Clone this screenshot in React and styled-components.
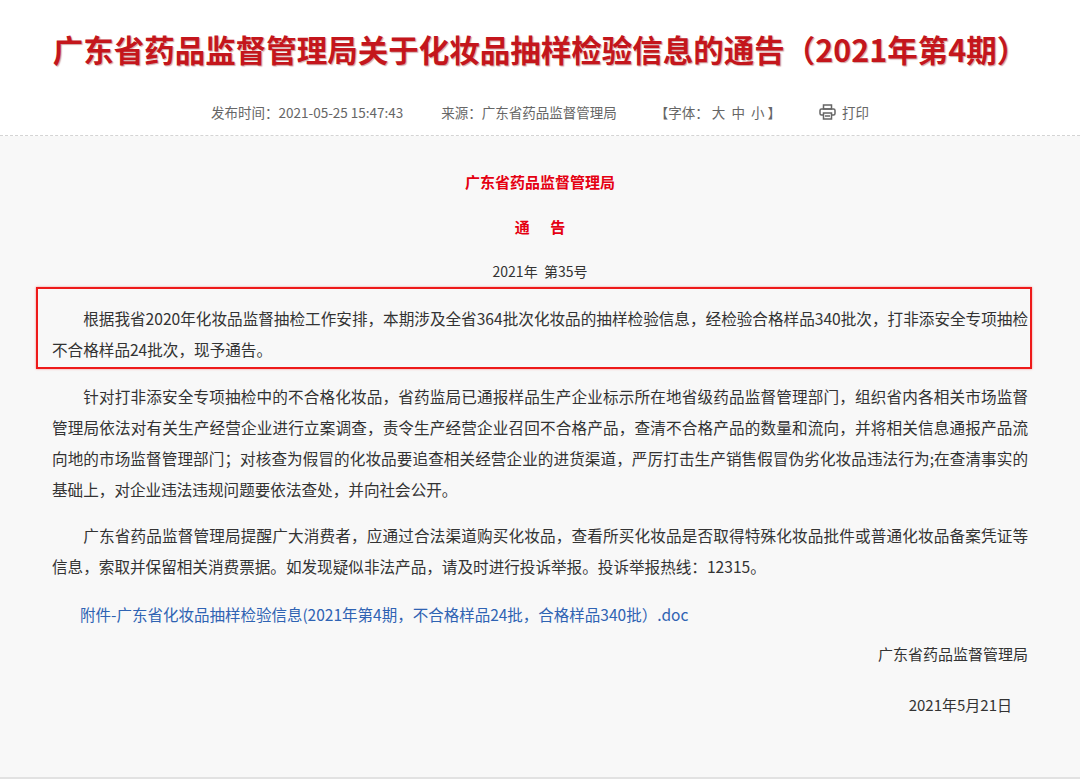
import React from "react";
import styled, { createGlobalStyle } from "styled-components";

const Global = createGlobalStyle`
  html, body { margin: 0; padding: 0; background: #fff; }
  body { font-family: "Noto Sans CJK SC", "Liberation Sans", sans-serif; color: #333; }
`;

const Header = styled.header`
  background: #fff;
  padding-top: 29px;
  border-bottom: 1px dashed #d4d4d4;
`;
const Title = styled.h1`
  margin: 0;
  text-align: center;
  color: #c4161c;
  font-size: 30.5px;
  font-weight: 700;
  line-height: 40px;
  letter-spacing: 0;
  text-shadow: 1px 1px 1px rgba(120,0,0,0.35);
`;
const Meta = styled.div`
  display: flex;
  justify-content: center;
  align-items: center;
  gap: 38px;
  padding: 33px 0 13px 0;
  font-size: 13.5px;
  color: #666;
  line-height: 20px;
`;
const MetaItem = styled.span`
  display: inline-flex;
  align-items: center;
  gap: 6px;
`;
const Body = styled.main`
  background: #f8f8f8;
  padding: 34px 52px 60px 52px;
  border-bottom: 2px solid #e2e2e2;
`;
const Center = styled.div`
  text-align: center;
  color: ${p => p.red ? "#e50012" : "#333"};
  font-weight: ${p => p.red ? 700 : 400};
  font-size: ${p => p.red ? 15 : 14}px;
  line-height: 24px;
  margin-bottom: ${p => p.mb}px;
  white-space: pre;
`;
const Box = styled.div`
  border: 2px solid #ee1a1a;
  margin: 0 -4px 0 -16px;
  padding: 14px 2px 2px 14px;
  box-shadow: 0 0 2px rgba(238,26,26,0.5);
`;
const P = styled.p`
  margin: 0 0 ${p => p.mb ?? 15}px 0;
  font-size: 15.6px;
  line-height: 31px;
  text-indent: 2em;
  text-align: justify;
  color: #333;
`;
const Link = styled.a`
  display: block;
  margin: 20px 0 0 28px;
  color: #2f63b3;
  font-size: 15.5px;
  line-height: 24px;
  text-decoration: none;
`;
const Sign = styled.div`
  text-align: right;
  font-size: 15px;
  line-height: 24px;
  color: #333;
  padding-right: ${p => p.pr}px;
  margin-top: ${p => p.mt}px;
`;

const PrintIcon = () => (
  <svg width="17" height="16" viewBox="0 0 17 16" fill="none" stroke="#666" strokeWidth="1.5">
    <rect x="4.5" y="1" width="8" height="4" />
    <rect x="1" y="5" width="15" height="6" rx="1.5" />
    <rect x="4.5" y="9" width="8" height="6" fill="#fff" />
    <line x1="6" y1="12" x2="11" y2="12" />
  </svg>
);

export default function App() {
  return (
    <>
      <Global />
      <Header>
        <Title>广东省药品监督管理局关于化妆品抽样检验信息的通告（2021年第4期）</Title>
        <Meta>
          <MetaItem>发布时间：2021-05-25 15:47:43</MetaItem>
          <MetaItem>来源：广东省药品监督管理局</MetaItem>
          <MetaItem>【字体：&nbsp;大&nbsp;&nbsp;中&nbsp;&nbsp;小&nbsp;】</MetaItem>
          <MetaItem><PrintIcon />打印</MetaItem>
        </Meta>
      </Header>
      <Body>
        <Center red mb={21}>广东省药品监督管理局</Center>
        <Center red mb={20}>{"通      告"}</Center>
        <Center mb={4}>2021年  第35号</Center>
        <Box>
          <P mb={0}>根据我省2020年化妆品监督抽检工作安排，本期涉及全省364批次化妆品的抽样检验信息，经检验合格样品340批次，打非添安全专项抽检不合格样品24批次，现予通告。</P>
        </Box>
        <P style={{ marginTop: 12 }}>针对打非添安全专项抽检中的不合格化妆品，省药监局已通报样品生产企业标示所在地省级药品监督管理部门，组织省内各相关市场监督管理局依法对有关生产经营企业进行立案调查，责令生产经营企业召回不合格产品，查清不合格产品的数量和流向，并将相关信息通报产品流向地的市场监督管理部门；对核查为假冒的化妆品要追查相关经营企业的进货渠道，严厉打击生产销售假冒伪劣化妆品违法行为;在查清事实的基础上，对企业违法违规问题要依法查处，并向社会公开。</P>
        <P mb={0}>广东省药品监督管理局提醒广大消费者，应通过合法渠道购买化妆品，查看所买化妆品是否取得特殊化妆品批件或普通化妆品备案凭证等信息，索取并保留相关消费票据。如发现疑似非法产品，请及时进行投诉举报。投诉举报热线：12315。</P>
        <Link href="#">附件-广东省化妆品抽样检验信息(2021年第4期，不合格样品24批，合格样品340批）.doc</Link>
        <Sign pr={0} mt={16}>广东省药品监督管理局</Sign>
        <Sign pr={16} mt={27}>2021年5月21日</Sign>
      </Body>
    </>
  );
}
